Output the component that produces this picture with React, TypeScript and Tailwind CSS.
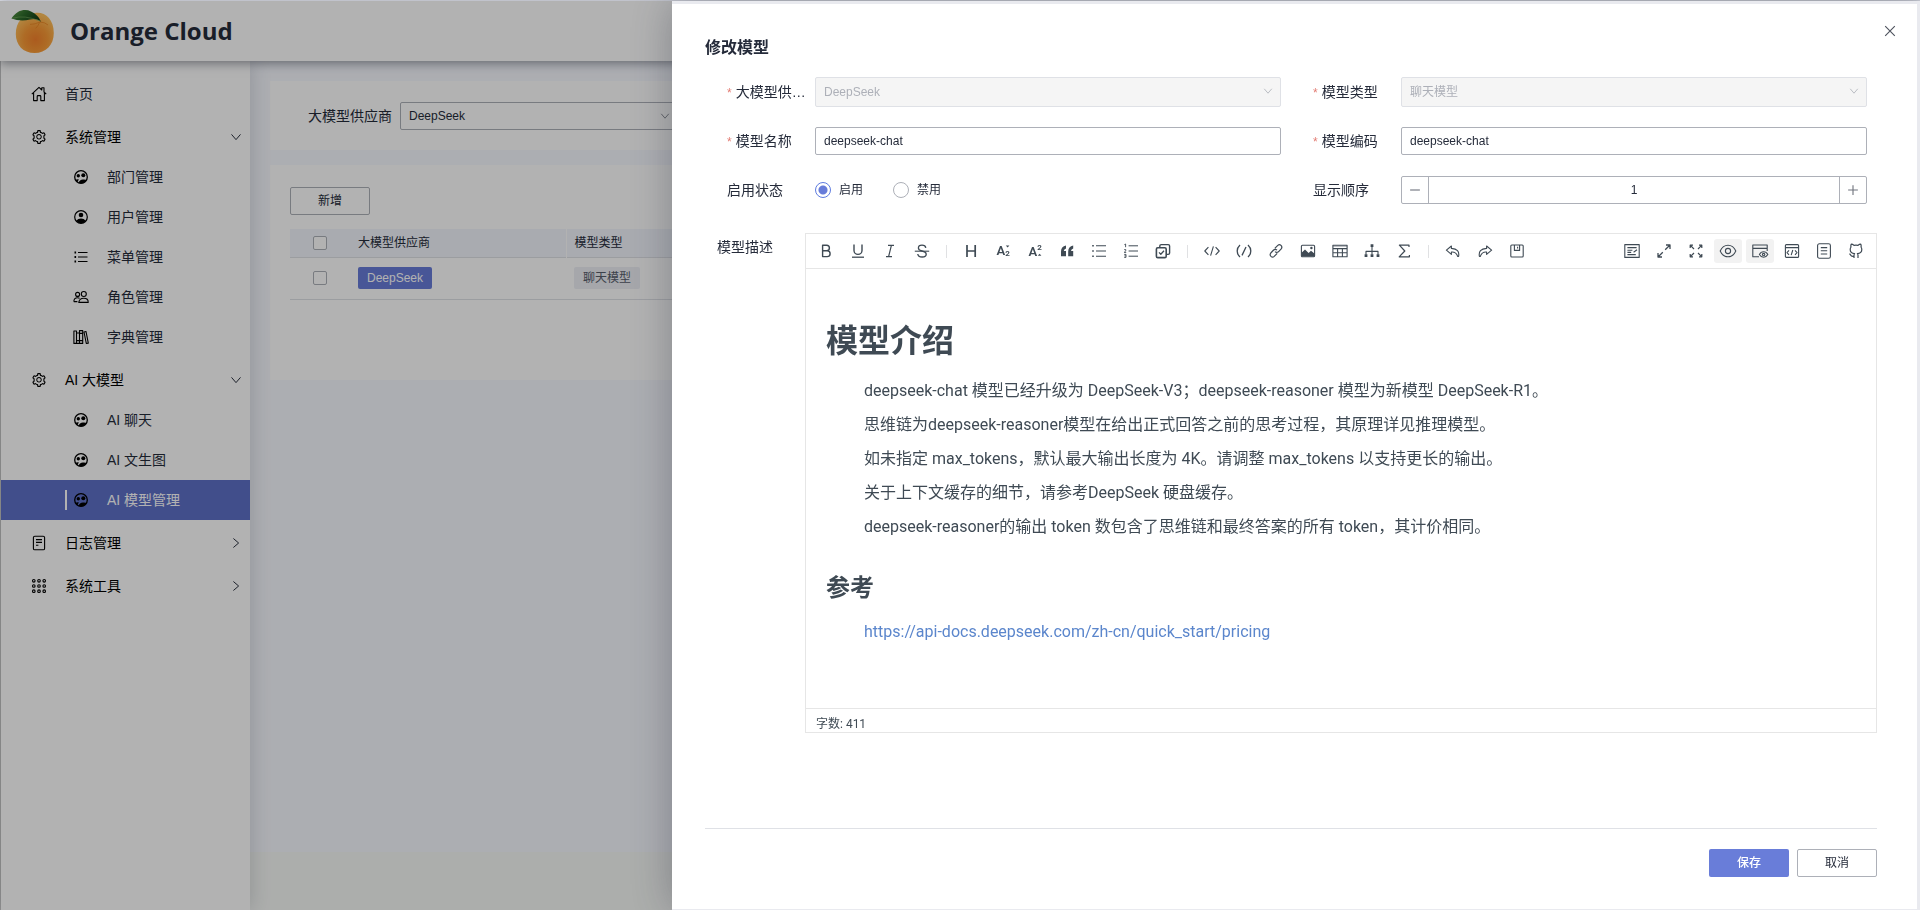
/**
 * Model management page with the "edit model" drawer opened on top of it.
 */

import React, { useState } from 'react';
import { AiOutlineSetting } from 'react-icons/ai';

// ============================================================================
// ICONS
// ============================================================================

interface IconProps {
  size?: number;
  className?: string;
  children?: React.ReactNode;
}

// Base for the 16x16 line icons
const Svg: React.FC<IconProps> = ({ size = 16, className = '', children }) => (
  <svg
    width={size}
    height={size}
    viewBox="0 0 16 16"
    fill="none"
    stroke="currentColor"
    strokeWidth="1.1"
    strokeLinejoin="round"
    className={`overflow-visible ${className}`}
    aria-hidden="true"
  >
    {children}
  </svg>
);

const Chevron: React.FC<IconProps> = ({ size = 12, className = '' }) => (
  <Svg size={size} className={className}>
    <path d="M2 4.5 8 11.5 14 4.5" strokeWidth="1.3" />
  </Svg>
);

const HomeIcon = () => (
  <Svg>
    <path d="M.8 8.2 8 1.4 10.8 4V1.8h2.2V6l2.2 2.2M2.6 7v7.6h3.6V10.4q0-.8.8-.8h2q.8 0 .8.8v4.2h3.6V7" />
  </Svg>
);

// Two heads inside a ring
const GroupIcon = () => (
  <Svg>
    <circle cx="8" cy="8" r="6.3" strokeWidth="1.3" />
    <circle cx="5.3" cy="6.8" r="1.7" fill="currentColor" stroke="none" />
    <circle cx="10.3" cy="6.2" r="2" fill="currentColor" stroke="none" />
    <path d="M2.4 10.8Q3.8 10 5.8 10.2L4.600 13Q3.200 12.400 2.400 10.800Z" fill="currentColor" stroke="none" />
    <path d="M5.600 13.800Q6.400 11 10 10.600q2.400-.2 3.600.6Q12 14.300 8 14.300q-1.400 0-2.400-.5Z" fill="currentColor" stroke="none" />
  </Svg>
);

const UserIcon = () => (
  <Svg>
    <circle cx="8" cy="8" r="6.3" strokeWidth="1.2" />
    <circle cx="8" cy="6" r="2.3" fill="currentColor" stroke="none" />
    <path d="M3.2 11.8Q5 9.6 8 9.6t4.8 2.2Q11 14.3 8 14.3t-4.8-2.5Z" fill="currentColor" stroke="none" />
  </Svg>
);

const MenuListIcon = () => (
  <Svg>
    <path d="M5 3.5h9.5M5 8h9.5M5 12.5h9.5" />
    <path d="M1.5 3.5h1.6M1.5 8h1.6M1.5 12.5h1.6" strokeWidth="1.8" />
  </Svg>
);

const RoleIcon = () => (
  <Svg>
    <circle cx="4.6" cy="5.4" r="2" />
    <circle cx="10.8" cy="5" r="2.5" />
    <path d="M5.8 13.4q.4-4.2 5-4.2t4.4 4.2ZM.8 12.6h3.6M.8 12.6Q1 8.8 4.6 8.8q1.2 0 2 .6" />
  </Svg>
);

const DictIcon = () => (
  <Svg>
    <path d="M.9 2h2.6v12.4H.9ZM3.5 4h3v10.4h-3ZM6.5 1.6h3.2v12.8H6.5ZM11 3l2-.5 2.3 11.6-2 .4ZM3.5 11.6h3M6.5 4.4h3.2M6.5 11.6h3.2" />
  </Svg>
);

const LogIcon = () => (
  <Svg>
    <rect x="2.4" y="1.2" width="11.2" height="13.6" rx="1.4" />
    <path d="M5 4.6h6M5 7.4h6M5 10.2h2.4" />
  </Svg>
);

const ToolsIcon = () => (
  <Svg>
    {[2.8, 8, 13.2].map((y) =>
      [2.8, 8, 13.2].map((x) => <circle key={`${x}-${y}`} cx={x} cy={y} r="1.3" />)
    )}
  </Svg>
);

const Logo = () => (
  <svg width="46" height="46" viewBox="0 0 46 46" aria-label="Orange Cloud logo" role="img">
    <defs>
      <radialGradient id="peel" cx="0.52" cy="0.66" r="0.62">
        <stop offset="0" stopColor="#f5822c" />
        <stop offset="0.5" stopColor="#f99a36" />
        <stop offset="1" stopColor="#ffc05c" />
      </radialGradient>
      <linearGradient id="leaf" x1="0" y1="0" x2="1" y2="0.4">
        <stop offset="0" stopColor="#5d9a48" />
        <stop offset="0.5" stopColor="#2c6a2a" />
        <stop offset="1" stopColor="#173f18" />
      </linearGradient>
    </defs>
    <path
      d="M25 5C35 3.6 43.8 11 43.8 25 43.8 37 36 45 24.6 45 13 45 5.8 37 5.8 26 5.8 14 13 6 25 5Z"
      fill="url(#peel)"
    />
    <path d="M30 14q-5 2.4-10 2.4M30 14q5 .2 8 3M29.6 14.4q-1.6 4-4 6" stroke="#e88423" strokeWidth="0.8" fill="none" />
    <path d="M1.4 10.6C7 2 15 .6 21 3.4 26.4 5.8 29.2 9.4 31.2 14 27.6 11 24.4 10.6 20 11.6 13.6 13.2 7.4 12.8 1.4 10.6Z" fill="url(#leaf)" />
    <path d="M3 10.2Q14 6.6 30 13" stroke="#79ad62" strokeWidth="0.6" fill="none" />
  </svg>
);

// ============================================================================
// SIDEBAR
// ============================================================================

interface MenuItem {
  label: string;
  icon: React.ReactNode;
  open?: boolean;
  active?: boolean;
  children?: MenuItem[];
}

const gear = <AiOutlineSetting size={16} />;
const group = <GroupIcon />;

const MENU: MenuItem[] = [
  { label: '首页', icon: <HomeIcon /> },
  {
    label: '系统管理',
    icon: gear,
    open: true,
    children: [
      { label: '部门管理', icon: group },
      { label: '用户管理', icon: <UserIcon /> },
      { label: '菜单管理', icon: <MenuListIcon /> },
      { label: '角色管理', icon: <RoleIcon /> },
      { label: '字典管理', icon: <DictIcon /> },
    ],
  },
  {
    label: 'AI 大模型',
    icon: gear,
    open: true,
    children: [
      { label: 'AI 聊天', icon: group },
      { label: 'AI 文生图', icon: group },
      { label: 'AI 模型管理', icon: group, active: true },
    ],
  },
  { label: '日志管理', icon: <LogIcon />, open: false, children: [] },
  { label: '系统工具', icon: <ToolsIcon />, open: false, children: [] },
];

const Sidebar = () => (
  <nav className="z-10 flex w-[249px] shrink-0 flex-col gap-[3px] bg-white pt-[13px] text-sm text-[#252b3a] shadow-[0_0_20px_rgba(37,43,58,0.2)]">
    {MENU.map((item) => (
      <div key={item.label}>
        <a href="#" className="flex h-10 items-center pl-[30px] pr-2">
          <span className="w-[34px] text-black">{item.icon}</span>
          <span className={`flex-1 ${item.children ? 'text-black' : ''}`}>{item.label}</span>
          {item.children && (
            <Chevron className={item.open ? '' : '-rotate-90'} />
          )}
        </a>
        {item.children?.map((child) => (
          <a
            key={child.label}
            href="#"
            className={`flex h-10 items-center pl-16 ${child.active ? 'bg-[#5e70c8] text-white' : ''}`}
          >
            <span className={`mr-[6px] h-5 w-[2px] ${child.active ? 'bg-white' : ''}`} />
            <span className="w-[34px] text-black">{child.icon}</span>
            {child.label}
          </a>
        ))}
      </div>
    ))}
  </nav>
);

// ============================================================================
// LIST PAGE
// ============================================================================

const checkboxClass =
  'block size-[14px] appearance-none rounded-[2px] border border-[#adb0b8] bg-white';

const ListPage = () => (
  <main className="flex flex-1 flex-col bg-[#f7f9ff]">
    <div className="flex flex-1 flex-col gap-[15px] p-5">
      <section className="flex h-[69px] items-center bg-white pl-[38px]">
        <label htmlFor="filter-provider" className="w-[92px] text-sm">
          大模型供应商
        </label>
        <div className="relative w-[280px]">
          <select
            id="filter-provider"
            className="h-7 w-full appearance-none rounded-[2px] border border-[#adb0b8] bg-white px-2 text-xs"
          >
            <option>DeepSeek</option>
          </select>
          <Chevron size={10} className="pointer-events-none absolute right-[10px] top-[9px] text-[#71757f]" />
        </div>
      </section>

      <section className="h-[215px] bg-white px-5 pt-[22px] text-xs">
        <button className="h-7 w-20 rounded-[2px] border border-[#adb0b8] bg-white">新增</button>
        <table className="mt-[14px] w-full table-fixed border-collapse text-left">
          <thead>
            <tr className="h-7 border-b border-[#dfe1e6] bg-[#f2f5fc]">
              <th className="w-[60px] pl-[23px]">
                <input type="checkbox" aria-label="全选" className={checkboxClass} />
              </th>
              <th className="w-[216px] border-r border-white px-2 font-normal">大模型供应商</th>
              <th className="w-[216px] border-r border-white px-2 font-normal">模型类型</th>
              <th />
            </tr>
          </thead>
          <tbody>
            <tr className="h-[42px] border-b border-[#dfe1e6]">
              <td className="pl-[23px]">
                <input type="checkbox" aria-label="DeepSeek" className={checkboxClass} />
              </td>
              <td className="px-2">
                <span className="inline-flex h-[22px] items-center rounded-[2px] bg-[#677cd9] px-[9px] text-white">DeepSeek</span>
              </td>
              <td className="px-2">
                <span className="inline-flex h-[22px] items-center rounded-[2px] bg-[#eef0f5] px-[9px] text-[#575d6c]">聊天模型</span>
              </td>
              <td />
            </tr>
          </tbody>
        </table>
      </section>
    </div>
    <footer className="h-[58px] bg-[#f7f9f7]" />
  </main>
);

// ============================================================================
// MARKDOWN EDITOR
// ============================================================================

interface Tool {
  name: string;
  icon?: React.ReactNode;
  active?: boolean;
}

const glyph = (x: number, y: number, size: number, text: string, extra = '') => (
  <text
    x={x}
    y={y}
    fontSize={size}
    fill="currentColor"
    stroke="none"
    textAnchor="middle"
    className={extra}
  >
    {text}
  </text>
);

const LEFT_TOOLS: Tool[] = [
  { name: '加粗', icon: <Svg><path d="M4.6 2.2h4a2.8 2.8 0 0 1 0 5.6h-4ZM4.6 7.8h4.6a2.9 2.9 0 0 1 0 5.8H4.6Z" strokeWidth="1.4" /></Svg> },
  { name: '下划线', icon: <Svg><path d="M4 1.6v5.8a4 4 0 0 0 8 0V1.6" strokeWidth="1.4" /><path d="M2 14.2h12" strokeWidth="1.3" /></Svg> },
  { name: '斜体', icon: <Svg><path d="M6 2.4h6M4 13.6h6M9.4 2.4 6.6 13.6" strokeWidth="1.2" /></Svg> },
  { name: '删除线', icon: <Svg><path d="M11.8 4.8Q11.4 2.2 8 2.2 4.4 2.2 4.4 5q0 2.2 3.6 3 4.2 1 4.2 3.2 0 2.8-4 2.8-4.2 0-4.4-3" strokeWidth="1.3" /><path d="M.8 8.2h14.4" /></Svg> },
  { name: '-' },
  { name: '标题', icon: <Svg><path d="M4 2v12M12.2 2v12M4 8h8.2" strokeWidth="1.7" /></Svg> },
  { name: '下标', icon: <Svg>{glyph(5.8, 12.4, 13, 'A', 'font-semibold')}{glyph(12.6, 13.4, 8, '2', 'font-bold')}<path d="m10.8 2.6 1.8 2 1.8-2Z" fill="currentColor" stroke="none" /></Svg> },
  { name: '上标', icon: <Svg>{glyph(5.8, 12.8, 13, 'A', 'font-semibold')}{glyph(12.6, 7.4, 8, '2', 'font-bold')}<path d="m10.8 12.8 1.8-2 1.8 2Z" fill="currentColor" stroke="none" /></Svg> },
  { name: '引用', icon: <Svg><path d="M7 2.6Q2 3.4 2 8.6v4.6h5V8H4.8q.2-2 2.2-2.6ZM14.2 2.6q-5 .8-5 6v4.6h5V8H12q.2-2 2.2-2.6Z" fill="currentColor" stroke="none" /></Svg> },
  { name: '无序列表', icon: <Svg><path d="M5 2.8h10M5 8h10M5 13.2h10" /><path d="M1.2 2.8h1.6M1.2 8h1.6M1.2 13.2h1.6" strokeWidth="1.6" /></Svg> },
  { name: '有序列表', icon: <Svg><path d="M5.6 2.8H15M5.6 8H15M5.6 13.2H15" strokeWidth="1" /><path d="M1.4 1.6 2.6 1v3.2M1.2 6.6h1.6v1.2L1.2 9.4h2M1.2 11.4h1.8v3H1.2M1.4 12.9H3" strokeWidth=".9" /></Svg> },
  { name: '任务列表', icon: <Svg><rect x="1.4" y="4.8" width="9.8" height="9.8" rx="1.4" strokeWidth="1.6" /><path d="M4.8 4.6V3q0-1.4 1.4-1.4h7q1.4 0 1.4 1.4v7q0 1.4-1.4 1.4h-1.6" strokeWidth="1.4" /><path d="m4 9.4 1.8 1.8L9 7.8" strokeWidth="1.3" /></Svg> },
  { name: '-' },
  { name: '行内代码', icon: <Svg><path d="M4.4 4.2.8 8l3.6 3.8M11.6 4.2 15.2 8l-3.6 3.8M9.4 3.4 6.6 12.6" /></Svg> },
  { name: '块级代码', icon: <Svg><path d="M4 2Q1.200 4.600 1.200 8T4 14M12 2q2.800 2.600 2.800 6T12 14M10 4 6 12.400" strokeWidth="1.300" /></Svg> },
  { name: '链接', icon: <Svg><path d="m6.8 5.4 3-3q1.6-1.4 3.2 0 1.6 1.6.2 3.4l-2.8 3q-1.8 1.4-3.4-.2M9.2 10.4l-3 3q-1.6 1.4-3.2 0-1.6-1.6-.2-3.4l2.8-3Q7.4 5.6 9 7.2" strokeWidth="1.2" /></Svg> },
  { name: '图片', icon: <Svg><rect x="1.4" y="2.2" width="13.2" height="11.6" rx="1" /><path d="M1.8 9.6 5 6.4 8.6 10 11 7.8l3.4 2.6v3H1.8Z" fill="currentColor" stroke="none" /><circle cx="11.4" cy="5" r="1.2" fill="currentColor" stroke="none" /></Svg> },
  { name: '表格', icon: <Svg><path d="M.9 2.2h14.2v11.6H.9ZM.9 5.6h14.2M.9 9.7h14.2M5.6 5.6v8.2M10.4 5.6v8.2" /><path d="M.9 3.2h14.2" strokeWidth="1" opacity=".5" /></Svg> },
  { name: 'mermaid图', icon: <Svg><path d="M8 3.5v8M2 11.5V8.4h12v3.1" /><path d="M6.6 1.2h2.8V4H6.6ZM.6 11.2h2.8V14H.6ZM6.6 11.2h2.8V14H6.6ZM12.6 11.2h2.8V14h-2.8Z" fill="currentColor" stroke="none" /></Svg> },
  { name: '公式', icon: <Svg><path d="M13 4V2.2H3.4L8.8 8l-5.6 5.8h10.2V12" strokeWidth="1.2" /></Svg> },
  { name: '-' },
  { name: '后退', icon: <Svg><path d="M6.4 3 1.4 7.2l5 4.2V9q4.8-.4 6.2 4.4h1Q15 6 6.4 5.4Z" /></Svg> },
  { name: '前进', icon: <Svg><path d="m9.6 3 5 4.2-5 4.2V9q-4.8-.4-6.2 4.4h-1Q1 6 9.6 5.4Z" /></Svg> },
  { name: '保存', icon: <Svg><rect x="1.8" y="2" width="12.4" height="12" rx="1" /><path d="M5.4 2v5.4h5.2V2M8.6 3.8v1.8" /></Svg> },
];

const RIGHT_TOOLS: Tool[] = [
  { name: '美化', icon: <Svg><path d="M.8 1.6h14.4v12.8H.8ZM3.4 4.6h9.2M3.4 7.2h5M3.4 9.4h3.8M3.4 11.6h8.4M13 6.8 9.6 9.2" /></Svg> },
  { name: '浏览器全屏', icon: <Svg><path d="M9.2 6.8 14 2M10 2h4v4M6.8 9.2 2 14M2 10v4h4" strokeWidth="1.3" /></Svg> },
  { name: '屏幕全屏', icon: <Svg><path d="M6 6 2.4 2.4M2.2 5V2.2H5M10 6l3.6-3.6M11 2.2h2.8V5M6 10l-3.6 3.6M2.2 11v2.8H5M10 10l3.6 3.6M13.8 11v2.8H11" strokeWidth="1.2" /></Svg> },
  { name: '预览', icon: <Svg><path d="M.2 8Q2.8 2.2 8 2.2T15.8 8Q13.2 13.8 8 13.8T.2 8Z" /><circle cx="8" cy="8" r="2.6" /></Svg>, active: true },
  { name: '仅预览', icon: <Svg><path d="M7 13.8H.8V2h14.4v6M.8 5.4h14.4" /><path d="M7.4 11.6q1.4-2.8 4.2-2.8t4.2 2.8q-1.4 2.6-4.2 2.6t-4.2-2.6Z" /><circle cx="11.6" cy="11.6" r="1.2" /></Svg>, active: true },
  { name: 'html代码预览', icon: <Svg><rect x="1.4" y="1.6" width="13.2" height="12.8" rx="1" /><path d="M1.4 4.6h13.2M5 7.4 3 9.6l2 2.2M11 7.4l2 2.2-2 2.2M8.8 7 7.2 12.2" /></Svg> },
  { name: '目录', icon: <Svg><rect x="1.6" y=".8" width="12.8" height="14.4" rx="1.8" /><path d="M4.8 4.6h6.4M4.8 7.8h6.4M4.8 11h6.4" /></Svg> },
  { name: '源码地址', icon: <Svg><path d="M6 15v-2.800q0-1 .6-1.600Q2.200 10.200 2.200 6.400q0-1.400.8-2.400-.4-1.400.2-2.800 1.600 0 2.800 1.200 2-.4 4 0 1.200-1.200 2.800-1.200.6 1.400.2 2.800.8 1 .8 2.400 0 3.800-4.400 4.200.6.600.6 1.600V15M6 13.200q-2.600.6-3.400-1.200-.4-.8-1.200-1.200" strokeWidth="1.200" /></Svg> },
];

const Toolbar: React.FC<{ tools: Tool[] }> = ({ tools }) => (
  <div className="flex items-center">
    {tools.map((tool, i) =>
      tool.name === '-' ? (
        <span key={i} className="mx-2 h-[13px] w-px bg-[#e0e1e3]" />
      ) : (
        <button
          key={i}
          title={tool.name}
          className={`mx-[2px] flex h-6 w-7 items-center justify-center rounded-[3px] ${tool.active ? 'bg-[#f2f2f2]' : ''}`}
        >
          {tool.icon}
        </button>
      )
    )}
  </div>
);

const PARAGRAPHS = [
  'deepseek-chat 模型已经升级为 DeepSeek-V3；deepseek-reasoner 模型为新模型 DeepSeek-R1。',
  '思维链为deepseek-reasoner模型在给出正式回答之前的思考过程，其原理详见推理模型。',
  '如未指定 max_tokens，默认最大输出长度为 4K。请调整 max_tokens 以支持更长的输出。',
  '关于上下文缓存的细节，请参考DeepSeek 硬盘缓存。',
  'deepseek-reasoner的输出 token 数包含了思维链和最终答案的所有 token，其计价相同。',
];

const Editor = () => (
  <div className="flex h-[500px] flex-1 flex-col border border-[#e6e6e6] font-['Roboto','Noto_Sans_CJK_SC',sans-serif] text-[#3f4a54]">
    <div className="flex h-[35px] shrink-0 items-center justify-between border-b border-[#e6e6e6] px-1">
      <Toolbar tools={LEFT_TOOLS} />
      <Toolbar tools={RIGHT_TOOLS} />
    </div>
    <article className="flex-1 px-5 pt-12">
      <h1 className="text-[32px]/[48px] font-bold">模型介绍</h1>
      <div className="mt-[9px] pl-[38px] text-base/[34px]">
        {PARAGRAPHS.map((text) => (
          <p key={text}>{text}</p>
        ))}
      </div>
      <h2 className="mt-[26px] text-2xl/9 font-bold">参考</h2>
      <p className="mt-[9px] pl-[38px] text-base/[34px]">
        <a href="https://api-docs.deepseek.com/zh-cn/quick_start/pricing" className="text-[#5b86cc]">
          https://api-docs.deepseek.com/zh-cn/quick_start/pricing
        </a>
      </p>
    </article>
    <div className="h-6 shrink-0 border-t border-[#e6e6e6] px-[10px] text-xs/[30px]">字数: 411</div>
  </div>
);

// ============================================================================
// DRAWER
// ============================================================================

interface FieldProps {
  label: string;
  id?: string;
  required?: boolean;
  children: React.ReactNode;
}

const Field: React.FC<FieldProps> = ({ label, id, required, children }) => (
  <div className="flex items-center">
    <label htmlFor={id} className="w-[88px] shrink-0 truncate pr-2 text-sm">
      {required && <span className="mr-1 text-xs text-[#e37d74]">*</span>}
      {label}
    </label>
    <div className="relative flex-1">{children}</div>
  </div>
);

const inputClass =
  'h-7 w-full rounded-[2px] border border-[#adb0b8] bg-white px-2 text-xs text-[#252b3a]';
const selectClass =
  'h-[30px] w-full appearance-none rounded-[2px] border border-[#dfe1e6] bg-[#f5f5f5] px-2 text-xs text-[#adb0b8] opacity-100';

const Radio: React.FC<{ label: string; checked: boolean; onChange: () => void }> = ({
  label,
  checked,
  onChange,
}) => (
  <label className="flex items-center gap-2 text-xs">
    <input
      type="radio"
      name="status"
      checked={checked}
      onChange={onChange}
      className="size-4 appearance-none rounded-full border border-[#adb0b8] bg-white checked:border-[#5e7ce0] checked:bg-[radial-gradient(circle,#677cd9_4px,white_5px)]"
    />
    {label}
  </label>
);

const EditDrawer = () => {
  const [enabled, setEnabled] = useState(true);
  const [name, setName] = useState('deepseek-chat');
  const [code, setCode] = useState('deepseek-chat');
  const [order, setOrder] = useState(1);

  return (
    <aside
      role="dialog"
      aria-label="修改模型"
      className="fixed bottom-0 right-0 top-px z-30 flex w-[65%] flex-col border-b border-r-[3px] border-t-[3px] border-[#e9eaef] bg-white pb-8 pl-[33px] pr-10 pt-8 shadow-[0_0_40px_rgba(37,43,58,0.35)]"
    >
      <button aria-label="关闭" className="absolute right-5 top-5 text-[#4e535e]">
        <Svg size={14}>
          <path d="m2.5 2.5 11 11M13.5 2.5l-11 11" strokeWidth="1.3" />
        </Svg>
      </button>
      <h2 className="text-base/6 font-bold">修改模型</h2>

      <form className="mt-[17px] grid grid-cols-2 gap-x-8 gap-y-5 pl-[22px] pr-[10px]">
        <Field label="大模型供应商" id="provider" required>
          <select id="provider" disabled className={selectClass}>
            <option>DeepSeek</option>
          </select>
          <Chevron size={10} className="absolute right-2 top-[9px] text-[#adb0b8]" />
        </Field>
        <Field label="模型类型" id="type" required>
          <select id="type" disabled className={selectClass}>
            <option>聊天模型</option>
          </select>
          <Chevron size={10} className="absolute right-2 top-[9px] text-[#adb0b8]" />
        </Field>
        <Field label="模型名称" id="name" required>
          <input id="name" value={name} onChange={(e) => setName(e.target.value)} className={inputClass} />
        </Field>
        <Field label="模型编码" id="code" required>
          <input id="code" value={code} onChange={(e) => setCode(e.target.value)} className={inputClass} />
        </Field>
        <Field label="启用状态">
          <div className="flex h-[30px] items-center gap-[30px]">
            <Radio label="启用" checked={enabled} onChange={() => setEnabled(true)} />
            <Radio label="禁用" checked={!enabled} onChange={() => setEnabled(false)} />
          </div>
        </Field>
        <Field label="显示顺序" id="order">
          <div className="flex h-7 rounded-[2px] border border-[#adb0b8] text-[#71757f]">
            <button type="button" aria-label="减少" onClick={() => setOrder(order - 1)} className="flex w-[26px] items-center justify-center">
              <Svg size={12}><path d="M1.5 8h13" strokeWidth="1.5" /></Svg>
            </button>
            <input
              id="order"
              value={order}
              onChange={(e) => setOrder(Number(e.target.value) || 0)}
              className="min-w-0 flex-1 border-x border-[#adb0b8] text-center text-xs text-[#252b3a]"
            />
            <button type="button" aria-label="增加" onClick={() => setOrder(order + 1)} className="flex w-[26px] items-center justify-center">
              <Svg size={12}><path d="M1.5 8h13M8 1.5v13" strokeWidth="1.5" /></Svg>
            </button>
          </div>
        </Field>
      </form>

      <div className="mt-7 flex pl-3">
        <span className="w-[88px] text-sm/7">模型描述</span>
        <Editor />
      </div>

      <div className="mt-auto flex justify-end gap-2 border-t border-[#dfe1e6] pt-5 text-xs">
        <button className="h-7 w-20 rounded-[2px] bg-[#697dd9] font-medium text-white">保存</button>
        <button className="h-7 w-20 rounded-[2px] border border-[#adb0b8] bg-white">取消</button>
      </div>
    </aside>
  );
};

// ============================================================================
// APP
// ============================================================================

const App: React.FC = () => (
  <div className="flex min-h-screen flex-col border-t border-[#dfe1e9] font-['Liberation_Sans','Noto_Sans_CJK_SC',sans-serif] text-[#252b3a]">
    <header className="z-20 flex h-[60px] items-center bg-white pl-[10px] shadow-[0_2px_10px_rgba(37,43,58,0.5)]">
      <Logo />
      <h1 className="ml-[14px] font-['Open_Sans',sans-serif] text-2xl font-bold">Orange Cloud</h1>
    </header>
    <div className="flex flex-1 border-l border-[#d0d0d0]">
      <Sidebar />
      <ListPage />
    </div>
    <div className="fixed inset-x-0 bottom-0 top-px z-20 bg-black/30" />
    <EditDrawer />
  </div>
);

export default App;
